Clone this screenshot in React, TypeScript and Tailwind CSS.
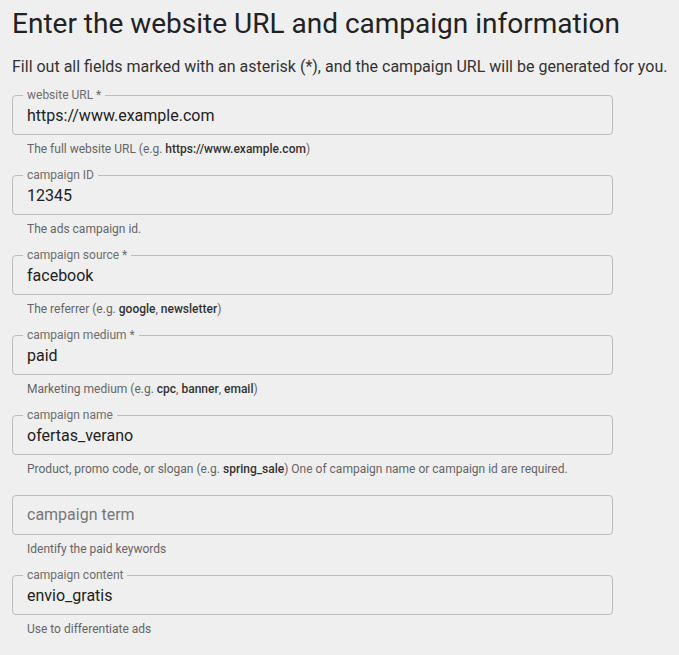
import React from "react";

type Field = {
  label: string;
  value?: string;
  placeholder?: string;
  helper: React.ReactNode;
};

const B = ({ children }: { children: React.ReactNode }) => (
  <span className="font-medium text-[#333]">{children}</span>
);

const fields: Field[] = [
  {
    label: "website URL *",
    value: "https://www.example.com",
    helper: (
      <>
        The full website URL (e.g. <B>https://www.example.com</B>)
      </>
    ),
  },
  { label: "campaign ID", value: "12345", helper: "The ads campaign id." },
  {
    label: "campaign source *",
    value: "facebook",
    helper: (
      <>
        The referrer (e.g. <B>google</B>, <B>newsletter</B>)
      </>
    ),
  },
  {
    label: "campaign medium *",
    value: "paid",
    helper: (
      <>
        Marketing medium (e.g. <B>cpc</B>, <B>banner</B>, <B>email</B>)
      </>
    ),
  },
  {
    label: "campaign name",
    value: "ofertas_verano",
    helper: (
      <>
        Product, promo code, or slogan (e.g. <B>spring_sale</B>) One of campaign name or campaign id are required.
      </>
    ),
  },
  { label: "campaign term", placeholder: "campaign term", helper: "Identify the paid keywords" },
  { label: "campaign content", value: "envio_gratis", helper: "Use to differentiate ads" },
];

export default function App() {
  return (
    <div
      className="min-h-[655px] w-[679px] overflow-hidden bg-[#efefef] px-[12px] pt-[6px] text-[#222]"
      style={{ fontFamily: "Roboto, 'Liberation Sans', sans-serif" }}
    >
      <h1 className="whitespace-nowrap text-[28px] leading-[36px] font-normal text-[#222]">
        Enter the website URL and campaign information
      </h1>
      <p className="mt-[15px] whitespace-nowrap text-[16px] leading-[20px] text-[#333]">
        Fill out all fields marked with an asterisk (*), and the campaign URL will be generated for you.
      </p>
      <div className="mt-[18px] flex flex-col">
        {fields.map((f, i) => (
          <div key={i} className="flex h-[80px] flex-col">
            <div className="relative flex h-[40px] w-[601px] items-center rounded-[4px] border border-[#bdbdbd] pl-[14px]">
              {f.value !== undefined && (
                <span className="absolute -top-[8px] left-[10px] bg-[#efefef] px-[4px] text-[12px] leading-[14px] text-[#6e6e6e]">
                  {f.label}
                </span>
              )}
              {f.value !== undefined ? (
                <span className="pt-[1px] text-[16px] leading-[20px] text-[#222]">{f.value}</span>
              ) : (
                <span className="text-[16px] leading-[20px] text-[#777]">{f.placeholder}</span>
              )}
            </div>
            <div className="mt-[6px] pl-[15px] text-[12px] leading-[16px] text-[#666]">{f.helper}</div>
          </div>
        ))}
      </div>
    </div>
  );
}
